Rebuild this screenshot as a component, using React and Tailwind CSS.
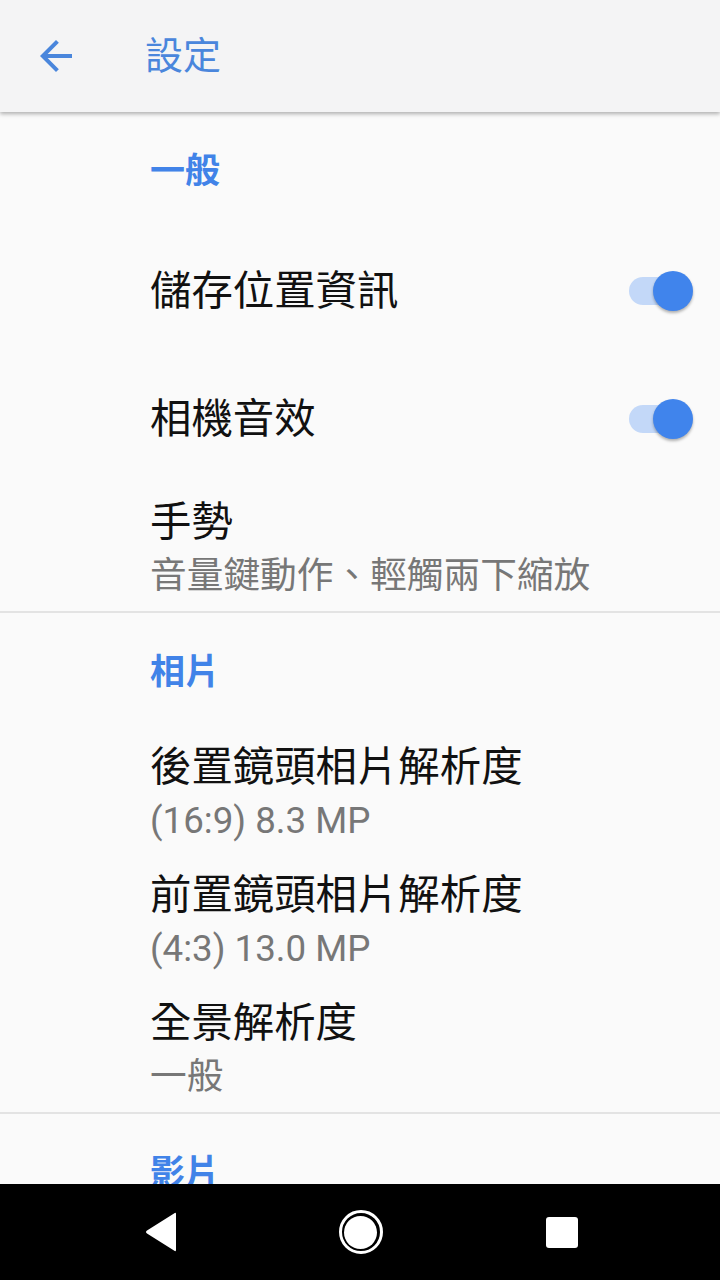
export default function App() {
  const font = { fontFamily: 'Roboto, "Noto Sans CJK TC", sans-serif' };
  const Toggle = () => (
    <div className="relative w-[64px] h-[40px] mr-[27px] shrink-0">
      <div className="absolute left-0 top-[6px] w-[56px] h-[28px] rounded-full bg-[#c3d8f8]" />
      <div className="absolute left-[24px] top-0 w-[40px] h-[40px] rounded-full bg-[#4084ec] shadow-[0_2px_3px_rgba(0,0,0,0.3)]" />
    </div>
  );
  const Section = ({ title }) => (
    <div className="h-[115px] shrink-0 pl-[150px] pt-[36px]">
      <div className="text-[35px] leading-[48px] font-bold text-[#4183e8]">{title}</div>
    </div>
  );
  const Single = ({ title }) => (
    <div className="h-[128px] shrink-0 flex items-center justify-between pl-[150px]">
      <div className="text-[41.4px] leading-[54px] text-[#111111]">{title}</div>
      <Toggle />
    </div>
  );
  const Double = ({ title, sub }) => (
    <div className="h-[128px] shrink-0 pl-[150px] pt-[12px]">
      <div className="text-[41.4px] leading-[54px] text-[#111111]">{title}</div>
      <div className="text-[36.7px] leading-[54px] text-[#777777]">{sub}</div>
    </div>
  );
  return (
    <div className="w-[720px] h-[1280px] flex flex-col bg-[#fafafa] overflow-hidden" style={font}>
      <div className="flex-1 min-h-0 overflow-hidden flex flex-col">
        <div className="h-[112px] shrink-0 bg-[#f4f4f5] flex items-center shadow-[0_2px_4px_rgba(0,0,0,0.3)] relative z-10">
          <svg width="48" height="48" viewBox="0 0 24 24" className="ml-[32px]">
            <path fill="#4a86dc" d="M20 11H7.83l5.59-5.59L12 4l-8 8 8 8 1.41-1.41L7.83 13H20v-2z" />
          </svg>
          <div className="ml-[65px] text-[38px] leading-[48px] text-[#4a86dc]">設定</div>
        </div>
        <Section title="一般" />
        <Single title="儲存位置資訊" />
        <Single title="相機音效" />
        <Double title="手勢" sub="音量鍵動作、輕觸兩下縮放" />
        <div className="h-[2px] shrink-0 bg-[#e3e3e3]" />
        <Section title="相片" />
        <Double title="後置鏡頭相片解析度" sub="(16:9) 8.3 MP" />
        <Double title="前置鏡頭相片解析度" sub="(4:3) 13.0 MP" />
        <Double title="全景解析度" sub="一般" />
        <div className="h-[2px] shrink-0 bg-[#e3e3e3]" />
        <Section title="影片" />
      </div>
      <div className="h-[96px] shrink-0 bg-black flex items-center justify-center">
        <svg width="36" height="40" viewBox="0 0 36 40" className="mr-[160px]">
          <path d="M33 2 L33 38 Q33 40 31 38.5 L4 21.5 Q2 20 4 18.5 L31 1.5 Q33 0 33 2 Z" fill="white" />
        </svg>
        <div className="w-[44px] h-[44px] rounded-full border-[3px] border-white flex items-center justify-center">
          <div className="w-[33px] h-[33px] rounded-full bg-white" />
        </div>
        <div className="w-[32px] h-[31px] rounded-[3px] bg-white ml-[163px]" />
      </div>
    </div>
  );
}
